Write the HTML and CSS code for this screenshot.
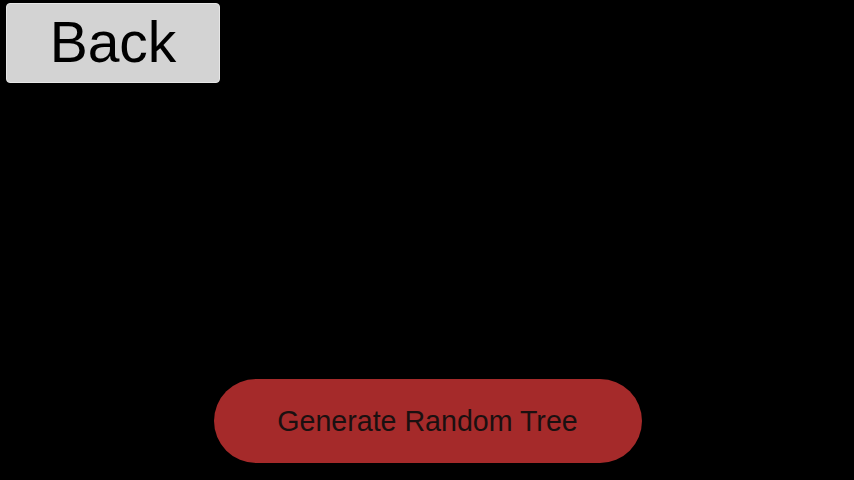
FILE: index.html
```html
<!DOCTYPE html>
<html>
<head>
<meta charset="utf-8">
<link rel="stylesheet" href="styles.css">
</head>
<body>
<div class="screen">
  <div class="top">
    <button class="back">Back</button>
  </div>
  <div class="bottom">
    <button class="generate">Generate Random Tree</button>
  </div>
</div>
</body>
</html>
```
FILE: styles.css
```css
html, body {
  margin: 0;
  padding: 0;
  background: #000;
  height: 100%;
}
.screen {
  height: 480px;
  display: flex;
  flex-direction: column;
  justify-content: space-between;
  font-family: "Liberation Sans", Arial, sans-serif;
}
.top {
  padding: 3px 0 0 6px;
}
.back {
  width: 214px;
  height: 80px;
  background: #d3d3d3;
  border: 1px solid #e6e6e6;
  border-radius: 4px;
  font-family: "Liberation Sans", Arial, sans-serif;
  font-size: 57px;
  color: #000;
  padding: 0 0 2px 0;
  display: block;
}
.bottom {
  display: flex;
  justify-content: center;
  padding-bottom: 17px;
}
.generate {
  width: 428px;
  height: 84px;
  background: #a52a2a;
  border: none;
  border-radius: 42px;
  font-family: "Liberation Sans", Arial, sans-serif;
  font-size: 28.6px;
  color: #1a1010;
  padding: 0;
  margin-left: 1px;
}
```
